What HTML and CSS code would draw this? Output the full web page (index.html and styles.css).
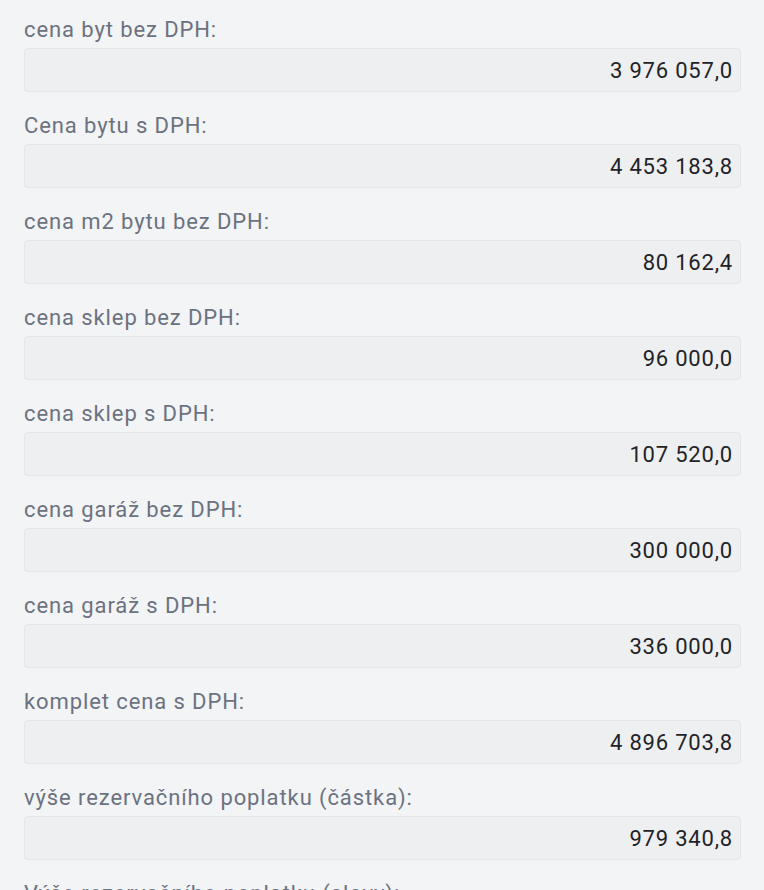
FILE: index.html
```html
<!DOCTYPE html>
<html lang="cs">
<head>
<meta charset="utf-8">
<title>Ceny</title>
<link rel="stylesheet" href="styles.css">
</head>
<body>
<form class="form">
  <div class="field"><label class="label">cena byt bez DPH:</label><div class="input">3 976 057,0</div></div>
  <div class="field"><label class="label">Cena bytu s DPH:</label><div class="input">4 453 183,8</div></div>
  <div class="field"><label class="label">cena m2 bytu bez DPH:</label><div class="input">80 162,4</div></div>
  <div class="field"><label class="label">cena sklep bez DPH:</label><div class="input">96 000,0</div></div>
  <div class="field"><label class="label">cena sklep s DPH:</label><div class="input">107 520,0</div></div>
  <div class="field"><label class="label">cena garáž bez DPH:</label><div class="input">300 000,0</div></div>
  <div class="field"><label class="label">cena garáž s DPH:</label><div class="input">336 000,0</div></div>
  <div class="field"><label class="label">komplet cena s DPH:</label><div class="input">4 896 703,8</div></div>
  <div class="field"><label class="label">výše rezervačního poplatku (částka):</label><div class="input">979 340,8</div></div>
  <div class="field"><label class="label">Výše rezervačního poplatku (slovy):</label><div class="input"></div></div>
</form>
</body>
</html>
```
FILE: styles.css
```css
html, body {
  margin: 0;
  padding: 0;
  background: #f3f4f6;
}
body {
  font-family: Roboto, "Liberation Sans", sans-serif;
  height: 890px;
  overflow: hidden;
}
.form {
  display: flex;
  flex-direction: column;
  gap: 20px;
  padding: 16px 23px 0 24px;
}
.field {
  display: flex;
  flex-direction: column;
  gap: 4px;
}
.label {
  font-size: 22px;
  line-height: 28px;
  letter-spacing: 0.9px;
  color: #6b7280;
}
.input {
  box-sizing: border-box;
  height: 44px;
  background: #eeeff1;
  border: 1.5px solid #e4e6ea;
  border-radius: 4px;
  padding: 0 7px 0 8px;
  display: flex;
  align-items: center;
  justify-content: flex-end;
  font-size: 22px;
  letter-spacing: 0.8px;
  color: #1f2328;
}
```
